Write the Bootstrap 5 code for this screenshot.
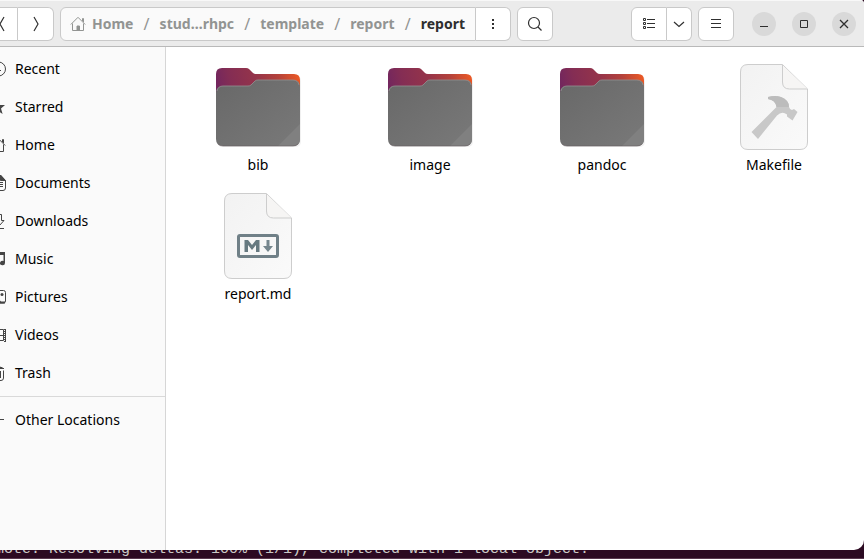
<!DOCTYPE html>
<html lang="en">
<head>
<meta charset="utf-8">
<meta name="viewport" content="width=device-width, initial-scale=1">
<title>report</title>
<link href="https://cdn.jsdelivr.net/npm/bootstrap@5.3.0/dist/css/bootstrap.min.css" rel="stylesheet">
<style>
  body { background: #2c0a22; font-family: "Noto Sans", "Open Sans", sans-serif; font-size: 14px; line-height: 20px; color: #000; }
  svg { display: block; flex: none; }
  /* The window hangs over the left edge of the desktop */
  .fm-window { margin-left: -18px; background: #fff; border-radius: 0 4px 10px 0; }
  .fm-header { height: 47px; background: #ebebeb; border-top: 1px solid #f8f8f8; border-bottom: 1px solid #b9b9b9; padding: 0 8px 0 0; }
  .fm-btn { height: 34px; width: 36px; padding: 0; background: #fff; border: 1px solid #c9c9c9; border-radius: 6px; color: #303030; display: flex; align-items: center; justify-content: center; }
  .fm-mid { width: 35px; }
  .fm-narrow { width: 25px; }
  .fm-gap { gap: 6px; }
  .fm-path { height: 34px; width: 416px; background: #fafafa; border: 1px solid #c9c9c9; border-radius: 6px 0 0 6px; padding: 0 10px 0 9px; font-weight: 700; }
  .fm-path a { color: #929492; }
  .fm-path a.fm-here { color: #2e2e2e; }
  .fm-home { gap: 6px; }
  .fm-slash { color: #929492; font-weight: 400; font-size: 16px; }
  .fm-controls { margin-left: 18px; }
  .fm-round { width: 24px; height: 24px; padding: 0; border: 0; border-radius: 50%; background: #d9d9d9; color: #2e2e2e; display: flex; align-items: center; justify-content: center; }
  .fm-side { width: 184px; background: #fafafa; border-right: 1px solid #d6d6d6; padding-top: 3px; }
  .fm-place { height: 38px; padding-left: 8px; gap: 9px; color: #000; }
  .fm-place svg { color: #454545; }
  .fm-rule { margin: 4px 0; border-top: 1px solid #d9d9d9; opacity: 1; }
  .fm-files { display: grid; grid-template-columns: repeat(auto-fill, 172px); align-content: start; row-gap: 13px; padding: 12px 0 0 6px; }
  .fm-file { color: #000; }
  .term { height: 9px; background: #2c0a22; border-bottom: 1px solid #59384f; overflow: hidden; font: 15px/16px "Liberation Mono", monospace; color: #c9c8c5; }
  .term-line { margin-left: -23px; white-space: pre; }
</style>
</head>
<body>
<svg width="0" height="0" class="position-absolute" aria-hidden="true">
  <defs>
    <linearGradient id="back" gradientUnits="userSpaceOnUse" x1="6" y1="36" x2="90" y2="16"><stop offset="0" stop-color="#6f2560"/><stop offset=".2" stop-color="#842d54"/><stop offset=".5" stop-color="#95344a"/><stop offset=".75" stop-color="#b4423b"/><stop offset="1" stop-color="#ee5a24"/></linearGradient>
    <linearGradient id="front" x1="0" y1="0" x2="1" y2="1"><stop offset="0" stop-color="#686868"/><stop offset="1" stop-color="#797979"/></linearGradient>
    <linearGradient id="paper" x1="0" y1="0" x2="1" y2="1"><stop offset="0" stop-color="#f2f2f2"/><stop offset="1" stop-color="#fafafa"/></linearGradient>
    <symbol id="folder" viewBox="0 0 96 96">
      <path d="M6 81V15q0-6 6-6h24q3 0 4 2l3 3q1 1 3 1h38q6 0 6 6v60q0 6-6 6H12q-6 0-6-6z" fill="#000" opacity=".06" transform="translate(1 1)"/>
      <path d="M6 45V15q0-6 6-6h24q2 0 3 1l4 4q1 1 3 1h38q6 0 6 6v24z" fill="url(#back)"/>
      <path d="M6 34q0-7 7-7h25q2 0 3-1l4-4q1-1 3-1h35q7 0 7 7v52q0 7-7 7H13q-7 0-7-7z" fill="url(#front)"/>
      <path d="M7 32q1-5 6-5h25q2 0 3-1l4-4q1-1 3-1h35q5 0 6 5" fill="none" stroke="#929292" stroke-width=".8"/>
      <path d="M90 65v15q0 7-7 7H68z" fill="#808080"/>
      <path d="M8 85q2 2 5 2h70q3 0 5-2" fill="none" stroke="#655a5e" stroke-width=".6"/>
    </symbol>
    <symbol id="sheet" viewBox="0 0 96 96">
      <path d="M22 5.500h34.500l25 24.500V83q0 7.500-7.500 7.500H22q-7.500 0-7.500-7.500V13q0-7.500 7.500-7.500z" fill="url(#paper)" stroke="#cdcdcd"/>
      <path d="M56.500 6v17q0 7 7 7h18" fill="#f6f5f4" stroke="#cdcdcd"/>
    </symbol>
    <symbol id="house" viewBox="0 0 16 16"><path d="M.8 8.500 8 1.300l7.200 7.200M2.500 7.500v7H7v-4.500h2.500v4.500h4v-7M12.500 5V2.500h1V6" fill="none" stroke="currentColor"/><path d="M7 10h3v5H7z" fill="currentColor"/></symbol>
  </defs>
</svg>

<div class="d-flex flex-column vh-100 overflow-hidden">
  <div class="fm-window d-flex flex-column flex-grow-1 overflow-hidden">
    <header class="fm-header d-flex align-items-center">
      <div class="d-flex align-items-center fm-gap">
        <div class="btn-group">
          <button class="fm-btn rounded-end-0" type="button" aria-label="Back"><svg width="16" height="16" viewBox="0 0 16 16" fill="none" stroke="currentColor" stroke-width="1.200"><path d="M12 1 8 8l4 7"/></svg></button>
          <button class="fm-btn rounded-start-0 border-start-0" type="button" aria-label="Forward"><svg width="16" height="16" viewBox="0 0 16 16" fill="none" stroke="currentColor" stroke-width="1.200"><path d="m6 1 4 7-4 7"/></svg></button>
        </div>
        <div class="d-flex">
          <nav class="fm-path d-flex align-items-center justify-content-between" aria-label="Path">
            <a href="#" class="fm-home d-flex align-items-center text-decoration-none"><svg width="16" height="16"><use href="#house"/></svg>Home</a>
            <span class="fm-slash">/</span>
            <a href="#" class="text-decoration-none">stud…rhpc</a>
            <span class="fm-slash">/</span>
            <a href="#" class="text-decoration-none">template</a>
            <span class="fm-slash">/</span>
            <a href="#" class="text-decoration-none">report</a>
            <span class="fm-slash">/</span>
            <a href="#" class="text-decoration-none fm-here" aria-current="page">report</a>
          </nav>
          <button class="fm-btn fm-mid rounded-start-0 border-start-0" type="button" aria-label="Folder menu"><svg width="16" height="16" fill="currentColor"><path d="M7 3h2v2H7zM7 7h2v2H7zM7 11h2v2H7z"/></svg></button>
        </div>
        <button class="fm-btn" type="button" aria-label="Search"><svg width="16" height="16" fill="none" stroke="currentColor" stroke-width="1.200"><circle cx="7" cy="7" r="5.500"/><path d="m11 11 3.500 3.500"/></svg></button>
      </div>
      <div class="d-flex align-items-center fm-gap ms-auto">
        <div class="btn-group">
          <button class="fm-btn rounded-end-0" type="button" aria-label="List view"><svg width="16" height="16" fill="none" stroke="currentColor"><path d="M2.500 2.500h2v2h-2zM2.500 6.500h2v2h-2zM2.500 10.500h2v2h-2zM6 3.500h8M6 7.500h8M6 11.500h8"/></svg></button>
          <button class="fm-btn fm-narrow rounded-start-0 border-start-0" type="button" aria-label="View options"><svg width="12" height="16" fill="none" stroke="currentColor" stroke-width="1.200"><path d="m1 6 5 4.500L11 6"/></svg></button>
        </div>
        <button class="fm-btn" type="button" aria-label="Main menu"><svg width="16" height="16" fill="none" stroke="currentColor"><path d="M3 3.500h10M3 7.500h10M3 11.500h10"/></svg></button>
      </div>
      <div class="fm-controls d-flex gap-3">
        <button class="fm-round" type="button" aria-label="Minimize"><svg width="16" height="16" stroke="currentColor"><path d="M4 10.500h8"/></svg></button>
        <button class="fm-round" type="button" aria-label="Maximize"><svg width="16" height="16" fill="none" stroke="currentColor"><path d="M4.500 4.500h7v7h-7z"/></svg></button>
        <button class="fm-round" type="button" aria-label="Close"><svg width="16" height="16" stroke="currentColor" stroke-width="1.300"><path d="m4 4 8 8m0-8-8 8"/></svg></button>
      </div>
    </header>
    <div class="d-flex flex-grow-1">
      <nav class="fm-side flex-shrink-0" aria-label="Places">
        <a href="#" class="fm-place d-flex align-items-center text-decoration-none"><svg width="16" height="16" fill="none" stroke="currentColor"><circle cx="8.500" cy="8" r="7"/><path d="M8.500 4v5.500H11"/></svg>Recent</a>
        <a href="#" class="fm-place d-flex align-items-center text-decoration-none"><svg width="16" height="16" fill="currentColor"><path d="m8 1 2.100 5H15l-4 3.500 1.600 5.500L8 11.700 3.400 15 5 9.500 1 6h4.900z"/></svg>Starred</a>
        <a href="#" class="fm-place d-flex align-items-center text-decoration-none"><svg width="16" height="16"><use href="#house"/></svg>Home</a>
        <a href="#" class="fm-place d-flex align-items-center text-decoration-none"><svg width="16" height="16" fill="none" stroke="currentColor"><path d="M3.500.5h7l5 5V13q0 2.500-2.500 2.500H5.500Q3 15.500 3 13zM5 7.500h8M5 9.500h8M5 11.500h8"/><path d="M10.500 0v5.500H15.500z" fill="currentColor"/></svg>Documents</a>
        <a href="#" class="fm-place d-flex align-items-center text-decoration-none"><svg width="16" height="16" fill="none" stroke="currentColor"><path d="M7.500 1.500h4v6H14l-4.500 5L5 7.500h2.500zM3 15.500h11"/></svg>Downloads</a>
        <a href="#" class="fm-place d-flex align-items-center text-decoration-none"><svg width="16" height="16" fill="currentColor"><path d="M5 1h10v11a2.500 2.200 0 1 1-1.500-2V4h-7v9A2.500 2.200 0 1 1 5 11z"/></svg>Music</a>
        <a href="#" class="fm-place d-flex align-items-center text-decoration-none"><svg width="16" height="16" fill="none" stroke="currentColor"><rect x="1.500" y="1.500" width="14" height="12.500" rx="2"/><path d="m3 14 5-5 4 5z" fill="currentColor" stroke="none"/><circle cx="12" cy="5.500" r="1.500" fill="currentColor" stroke="none"/><path d="M2 13.500h13" stroke-width="2"/></svg>Pictures</a>
        <a href="#" class="fm-place d-flex align-items-center text-decoration-none"><svg width="16" height="16" fill="none" stroke="currentColor"><path d="M1.500 2v13M3.500 2.500h10v11h-10zM4 8.500h9"/><path d="M15 2v13" stroke-width="2" stroke-dasharray="1 1"/><path d="M15.500 2v13"/></svg>Videos</a>
        <a href="#" class="fm-place d-flex align-items-center text-decoration-none"><svg width="16" height="16" fill="none" stroke="currentColor"><path d="M2 3.500h12M6 3V1.500h4V3M3.500 5.500V13q0 2.500 2.500 2.500h5q2.500 0 2.500-2.500V5.500M6.500 6v7M10.500 6v7"/><path d="M10 2h2l2 2h-4z" fill="currentColor" stroke="none"/></svg>Trash</a>
        <hr class="fm-rule">
        <a href="#" class="fm-place d-flex align-items-center text-decoration-none"><svg width="16" height="16" stroke="currentColor"><path d="M8.500 2v12M3 7.500h11"/></svg>Other Locations</a>
      </nav>
      <main class="fm-files flex-grow-1">
        <a href="#" class="fm-file d-flex flex-column align-items-center text-decoration-none"><svg width="96" height="96"><use href="#folder"/></svg>bib</a>
        <a href="#" class="fm-file d-flex flex-column align-items-center text-decoration-none"><svg width="96" height="96"><use href="#folder"/></svg>image</a>
        <a href="#" class="fm-file d-flex flex-column align-items-center text-decoration-none"><svg width="96" height="96"><use href="#folder"/></svg>pandoc</a>
        <a href="#" class="fm-file d-flex flex-column align-items-center text-decoration-none"><svg width="96" height="96"><use href="#sheet"/><path d="M42 38q7-2 13 0 8 3 8 10 1 3 3 3l2-1 3.500 3-5 8.500-5.500-4v-2q-5-4-10 1L32 80l-6.500-7 25-25q-1-7-8.500-8z" fill="#c8c8c8"/><path d="M42 38q7-2 13 0 8 3 8 10H50.500q-1-7-8.500-8z" fill="#bcbcbc"/></svg>Makefile</a>
        <a href="#" class="fm-file d-flex flex-column align-items-center text-decoration-none"><svg width="96" height="96"><use href="#sheet"/><rect x="28.500" y="47.500" width="39" height="21" rx="1.500" fill="none" stroke="#708087" stroke-width="3"/><path d="M34.500 64V52h3.500l4 5 4-5h3.500v12H46v-7l-4 5-4-5v7z" fill="#667980"/><path d="M56.500 52h3v6H63l-5 6-5-6h3.500z" fill="#75868d"/></svg>report.md</a>
      </main>
    </div>
  </div>
  <footer class="term d-flex flex-column justify-content-end flex-shrink-0"><div class="term-line">remote: Resolving deltas: 100% (1/1), completed with 1 local object.</div></footer>
</div>
<script src="https://cdn.jsdelivr.net/npm/bootstrap@5.3.0/dist/js/bootstrap.bundle.min.js"></script>
</body>
</html>
